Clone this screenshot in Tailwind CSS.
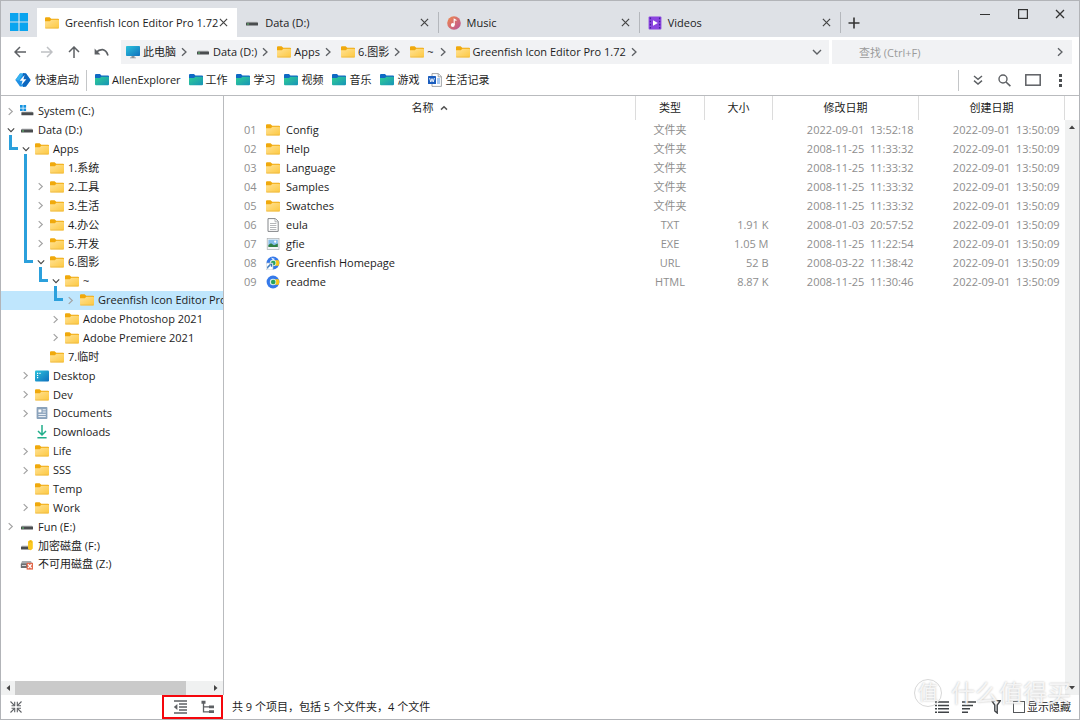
<!DOCTYPE html>
<html lang="zh-CN">
<head>
<meta charset="utf-8">
<title>Greenfish Icon Editor Pro 1.72</title>
<script src="https://cdn.jsdelivr.net/npm/@tailwindcss/browser@4"></script>
</head>
<body class="font-['Open_Sans','Noto_Sans_CJK_SC',sans-serif] text-[11px] leading-4 text-[#1c1c1c] bg-white">

<svg class="absolute size-0" aria-hidden="true" xmlns="http://www.w3.org/2000/svg">
  <defs>
    <linearGradient id="gFolder" x1="0" y1="0" x2="1" y2="1"><stop offset="0" stop-color="#ffe296"/><stop offset="1" stop-color="#fdc83f"/></linearGradient>
    <linearGradient id="gTeal" x1="0" y1="0" x2="1" y2="1"><stop offset="0" stop-color="#2fcf95"/><stop offset="1" stop-color="#1793b8"/></linearGradient>
    <linearGradient id="gBlue" x1="0" y1="0" x2="1" y2="1"><stop offset="0" stop-color="#2bc3dc"/><stop offset="1" stop-color="#0f6fbd"/></linearGradient>
    <linearGradient id="gMusic" x1="0" y1="0" x2="1" y2="1"><stop offset="0" stop-color="#f08a4b"/><stop offset="1" stop-color="#b9529a"/></linearGradient>
  </defs>
  <symbol id="i-folder" viewBox="0 0 14 14"><path d="M0 2.2Q0 1.2 1 1.2H4.6L6.2 2.8H13Q14 2.8 14 3.8V6H0Z" fill="#f0a90c"/><path d="M0 5.2H4.8L6.4 3.8H13Q14 3.8 14 4.8V11.4Q14 12.4 13 12.4H1Q0 12.4 0 11.4Z" fill="url(#gFolder)"/><path d="M.3 12H13.7" stroke="#eab440" stroke-width=".7"/></symbol>
  <symbol id="i-teal" viewBox="0 0 14 14"><path d="M0 2Q0 1 1 1H5L6.4 2.6H13Q14 2.6 14 3.6V7H0Z" fill="#0f69c4"/><path d="M0 5H5L6.4 3.8H13Q14 3.8 14 4.8V11.2Q14 12.2 13 12.2H1Q0 12.2 0 11.2Z" fill="url(#gTeal)"/></symbol>
  <symbol id="i-drive" viewBox="0 0 14 14"><path d="M2 5.4H12L13 7H1Z" fill="#c9cbcd"/><rect x="1" y="6.6" width="12" height="3" rx=".5" fill="#4a4d4f"/><rect x="2" y="7.4" width="2" height="1.2" fill="#5fae6a"/></symbol>
  <symbol id="i-sys" viewBox="0 0 14 14"><path d="M2 7.4H12L13 8.4H1Z" fill="#c9cbcd"/><rect x="1.4" y="8.2" width="12" height="3" rx=".5" fill="#4a4d4f"/><path d="M0 1H2.7V3.7H0ZM3.4 1H6.1V3.7H3.4ZM0 4.4H2.7V7.1H0ZM3.4 4.4H6.1V7.1H3.4Z" fill="#1593e0"/></symbol>
  <symbol id="i-lock" viewBox="0 0 14 14"><path d="M2 6.4H9V7.6H1Z" fill="#c9cbcd"/><rect x="1" y="7.4" width="9" height="3" rx=".5" fill="#4a4d4f"/><path d="M8 2.6Q10.5 -.6 12.8 2.4V9.6Q10.5 12.6 8 9.8Z" fill="#fbc81e"/><path d="M9.3 3.2Q10.5 1.4 11.6 3.2" fill="none" stroke="#e09d0c"/></symbol>
  <symbol id="i-off" viewBox="0 0 14 14"><path d="M2 4H11L12.4 7H.8Z" fill="#a9adb0"/><rect x=".8" y="6.4" width="11.6" height="4.6" rx=".6" fill="#6b6f73"/><path d="M2 8.5H6" stroke="#d4d6d8"/><rect x="6.6" y="5.8" width="6.4" height="6.8" fill="#e2674a"/><path d="M8 7.3L11.6 11.1M11.6 7.3L8 11.1" stroke="#fff" stroke-width="1.3"/></symbol>
  <symbol id="i-desktop" viewBox="0 0 14 14"><rect y="1.6" width="14" height="10.8" rx="1" fill="url(#gBlue)"/><path d="M2 4.3H3.2M2 6.5H3.2M2 8.7H3.2M4.4 4.3H5.6" stroke="#fff" stroke-width="1.2"/></symbol>
  <symbol id="i-pc" viewBox="0 0 14 14"><rect y="1" width="14" height="10" rx=".8" fill="url(#gBlue)"/><path d="M5.5 11H8.5V12.4H10V13.2H4V12.4H5.5Z" fill="#8b9299"/></symbol>
  <symbol id="i-doc" viewBox="0 0 14 14"><rect x="1.6" y="1" width="10.8" height="12" rx=".8" fill="#8aa2bb"/><path d="M3.4 3.4H6.4V6.4H3.4Z" fill="#fff"/><path d="M7.6 3.8H10.8M7.6 6H10.8M3.4 8.4H10.8M3.4 10.6H10.8" stroke="#f2f6fa" stroke-width="1"/></symbol>
  <symbol id="i-down" viewBox="0 0 14 14"><path d="M7 0V9.6M3 6L7 10L11 6M2.4 12.7H11.6" fill="none" stroke="#21ae8a" stroke-width="1.5"/></symbol>
  <symbol id="i-txt" viewBox="0 0 14 14"><path d="M2 .6H9.4L12.2 3.4V13.4H2Z" fill="#fff" stroke="#84878a"/><path d="M9 .8V3.8H12M4 5.5H10.4M4 7.5H10.4M4 9.5H10.4M4 11.5H10.4" fill="none" stroke="#a2a5a8" stroke-width=".8"/></symbol>
  <symbol id="i-img" viewBox="0 0 14 14"><rect x="1.2" y="1.5" width="11.8" height="11" fill="#f3f5f6" stroke="#a7adb1" stroke-width=".7"/><rect x="2.4" y="2.7" width="9.4" height="7" fill="#85bde9"/><path d="M2.4 8L5 6.2L8 8.2L11.8 6.4V9.9H2.4Z" fill="#2f7f43"/><circle cx="9.2" cy="4.7" r="1.1" fill="#fff"/></symbol>
  <symbol id="i-web" viewBox="0 0 14 14"><circle cx="7" cy="7" r="6.4" fill="#3579ea"/><path d="M9 4.2H12.700L13.400 7L12.700 9.800H9Z" fill="#fbc717"/><circle cx="7" cy="7" r="3.2" fill="#d9efe6"/><circle cx="7.2" cy="7" r="2.3" fill="#25a35a"/></symbol>
  <symbol id="i-url" viewBox="0 0 14 14"><use href="#i-web"/><path d="M5 1.6L9 3L7 4.6Z" fill="#e7f0fc"/><rect x="0" y="7" width="7" height="7" fill="#fff" stroke="#a5b4c4" stroke-width=".6"/><path d="M1.6 12.4Q1.6 9.6 4.4 9.6M3.2 8.3H5.6V10.8" fill="none" stroke="#2c6fb5" stroke-width="1.1"/></symbol>
  <symbol id="i-music" viewBox="0 0 14 14"><circle cx="7" cy="7" r="6.8" fill="url(#gMusic)"/><circle cx="5.8" cy="9" r="1.9" fill="#fff"/><path d="M7.2 9V3.2L9.4 4.4" fill="none" stroke="#fff" stroke-width="1.1"/></symbol>
  <symbol id="i-video" viewBox="0 0 14 14"><rect x=".6" y=".6" width="12.8" height="12.8" rx="1" fill="#8b45e0"/><path d="M2.4 1.6V13M11.6 1.6V13" stroke="#47209a" stroke-width="1.3" stroke-dasharray="1.6 1.5"/><path d="M5 4.2L9.8 7L5 9.8Z" fill="#fff"/></symbol>
  <symbol id="i-word" viewBox="0 0 14 14"><path d="M4 .6H10.4L13.4 3.6V13.4H4Z" fill="#fff" stroke="#8d9094" stroke-width=".8"/><path d="M10.2 .8V3.8H13.2" fill="none" stroke="#8d9094" stroke-width=".8"/><path d="M9 6H12M9 8H12M9 10H12" stroke="#4e93e6"/><rect x="0" y="3" width="8" height="8" rx=".6" fill="#1a5dbe"/><path d="M1.6 5L2.8 9L4 5.6L5.2 9L6.4 5" fill="none" stroke="#fff" stroke-width=".9"/></symbol>
  <symbol id="i-bolt" viewBox="0 0 16 16"><path d="M5 1.4H11L15.6 8L11 14.6H5L.4 8Z" fill="#1f8fe4"/><path d="M11 1.4L15.6 8L11 14.6L8 15V1Z" fill="#0c66be"/><path d="M.4 8L5 1.4H8L4 8.4Z" fill="#38b3f0"/><path d="M9.6 3L4.6 8.8H7.6L6.4 13L11.4 7.2H8.4Z" fill="#fff"/></symbol>
  <symbol id="i-right" viewBox="0 0 10 10"><path d="M3 1.2L7 5L3 8.8" fill="none" stroke="currentColor" stroke-width="1.3"/></symbol>
  <symbol id="i-chev" viewBox="0 0 10 10"><path d="M1 3L5 7L9 3" fill="none" stroke="currentColor" stroke-width="1.4"/></symbol>
  <symbol id="i-x" viewBox="0 0 10 10"><path d="M1 1L9 9M9 1L1 9" fill="none" stroke="currentColor" stroke-width="1.3"/></symbol>
</svg>

<div class="h-screen flex flex-col border border-[#b2b4b8] overflow-hidden">

  <!-- Title bar -->
  <header class="h-9 shrink-0 flex bg-[#dee1e6]">
    <button aria-label="Home" class="w-9 flex justify-center pt-3"><svg class="size-[18px]" viewBox="0 0 18 18"><path d="M0 0H8.4V8.4H0ZM9.6 0H18V8.4H9.6ZM0 9.6H8.4V18H0ZM9.6 9.6H18V18H9.6Z" fill="#0aa4ef"/></svg></button>
    <nav class="flex flex-1 max-w-[804px] pt-[7px]" aria-label="Tabs">
      <div class="flex-1 flex items-center pl-2 pr-[9px] bg-white"><svg class="size-[14px] mr-[6px]"><use href="#i-folder"/></svg><a href="#" class="flex-1 whitespace-nowrap">Greenfish Icon Editor Pro 1.72</a><button aria-label="Close"><svg class="size-[9px] text-[#444]"><use href="#i-x"/></svg></button></div>
      <div class="flex-1 flex items-center pl-2 pr-[9px]"><svg class="size-[14px] mr-[6px]"><use href="#i-drive"/></svg><a href="#" class="flex-1 whitespace-nowrap">Data (D:)</a><button aria-label="Close"><svg class="size-[9px] text-[#444]"><use href="#i-x"/></svg></button></div>
      <i class="w-px h-[21px] mt-1 bg-[#b4b7bc]"></i>
      <div class="flex-1 flex items-center pl-2 pr-[9px]"><svg class="size-[14px] mr-[6px]"><use href="#i-music"/></svg><a href="#" class="flex-1 whitespace-nowrap">Music</a><button aria-label="Close"><svg class="size-[9px] text-[#444]"><use href="#i-x"/></svg></button></div>
      <i class="w-px h-[21px] mt-1 bg-[#b4b7bc]"></i>
      <div class="flex-1 flex items-center pl-2 pr-[9px]"><svg class="size-[14px] mr-[6px]"><use href="#i-video"/></svg><a href="#" class="flex-1 whitespace-nowrap">Videos</a><button aria-label="Close"><svg class="size-[9px] text-[#444]"><use href="#i-x"/></svg></button></div>
      <i class="w-px h-[21px] mt-1 bg-[#b4b7bc]"></i>
    </nav>
    <button aria-label="New tab" class="w-[26px] flex justify-center items-center pt-[7px]"><svg class="size-3" viewBox="0 0 12 12"><path d="M6 .5V11.5M.5 6H11.5" stroke="#333" stroke-width="1.6"/></svg></button>
    <div class="ml-auto flex h-[26px] pr-px">
      <button aria-label="Minimize" class="w-[38px] flex items-center justify-center"><svg class="size-[10px]" viewBox="0 0 10 10"><path d="M0 5.5H10" stroke="#333"/></svg></button>
      <button aria-label="Maximize" class="w-[38px] flex items-center justify-center"><svg class="size-[10px]" viewBox="0 0 10 10"><rect x=".6" y=".6" width="8.8" height="8.8" fill="none" stroke="#333" stroke-width="1.2"/></svg></button>
      <button aria-label="Close window" class="w-9 flex items-center justify-center"><svg class="size-[10px] text-[#333]"><use href="#i-x"/></svg></button>
    </div>
  </header>

  <!-- Address row -->
  <div class="h-[30px] shrink-0 flex items-center pr-[7px] text-[#5d6064]">
    <div class="flex pl-[5px] w-[120px] shrink-0">
      <button aria-label="Back" class="w-[27px] flex justify-center"><svg class="size-3" viewBox="0 0 12 12"><path d="M12 6H1M6 1L1 6L6 11" fill="none" stroke="currentColor" stroke-width="1.5"/></svg></button>
      <button aria-label="Forward" class="w-[27px] flex justify-center text-[#bfc1c4]"><svg class="size-3" viewBox="0 0 12 12"><path d="M0 6H11M6 1L11 6L6 11" fill="none" stroke="currentColor" stroke-width="1.5"/></svg></button>
      <button aria-label="Up" class="w-[27px] flex justify-center"><svg class="size-3" viewBox="0 0 12 12"><path d="M6 12V1M1 6L6 1L11 6" fill="none" stroke="currentColor" stroke-width="1.5"/></svg></button>
      <button aria-label="Undo" class="w-[28px] flex justify-center"><svg class="w-[15px] h-3" viewBox="0 0 15 12"><path d="M2 6.4Q5 3.4 8.6 3.6Q12.4 4.2 14 9.4" fill="none" stroke="currentColor" stroke-width="1.6"/><path d="M.6 2.4V8.4H6.4Z" fill="currentColor"/></svg></button>
    </div>
    <div class="h-6 flex-1 flex items-center bg-[#f1f2f4] pl-[5px] pr-[7px] whitespace-nowrap">
      <svg class="size-[14px] mr-[3px]"><use href="#i-pc"/></svg><a href="#" class="text-[#1c1c1c]">此电脑</a><svg class="size-[10px] ml-[3px] mr-[7px]"><use href="#i-right"/></svg>
      <svg class="size-[14px] mr-[3px]"><use href="#i-drive"/></svg><a href="#" class="text-[#1c1c1c]">Data (D:)</a><svg class="size-[10px] ml-[3px] mr-[7px]"><use href="#i-right"/></svg>
      <svg class="size-[14px] mr-[3px]"><use href="#i-folder"/></svg><a href="#" class="text-[#1c1c1c]">Apps</a><svg class="size-[10px] ml-[3px] mr-2"><use href="#i-right"/></svg>
      <svg class="size-[14px] mr-[3px]"><use href="#i-folder"/></svg><a href="#" class="text-[#1c1c1c]">6.图影</a><svg class="size-[10px] ml-[3px] mr-2"><use href="#i-right"/></svg>
      <svg class="size-[14px] mr-[3px]"><use href="#i-folder"/></svg><a href="#" class="text-[#1c1c1c]">~</a><svg class="size-[10px] ml-1 mr-2"><use href="#i-right"/></svg>
      <svg class="size-[14px] mr-[3px]"><use href="#i-folder"/></svg><a href="#" class="text-[#1c1c1c]">Greenfish Icon Editor Pro 1.72</a><svg class="size-[10px] ml-[3px]"><use href="#i-right"/></svg>
      <button aria-label="History" class="ml-auto"><svg class="size-[10px]"><use href="#i-chev"/></svg></button>
    </div>
    <div class="h-6 w-[240px] ml-[3px] flex items-center bg-[#f1f2f4] pr-[7px]">
      <input type="text" aria-label="查找" placeholder="查找 (Ctrl+F)" class="flex-1 min-w-0 h-6 pl-[27px] outline-none placeholder:text-[#9b9b9b]">
      <button aria-label="Search options"><svg class="size-[10px]"><use href="#i-right"/></svg></button>
    </div>
  </div>

  <!-- Bookmarks -->
  <div class="h-[29px] shrink-0 flex items-center pb-[2px] pl-[14px] pr-[17px] border-b border-[#b9bbbe] whitespace-nowrap">
    <button class="flex items-center gap-1"><svg class="size-4"><use href="#i-bolt"/></svg>快速启动</button>
    <i class="w-px h-[21px] ml-[7px] mr-2 bg-[#c4c6c8]"></i>
    <div class="flex gap-2">
      <button class="flex items-center gap-[3px]"><svg class="size-[14px]"><use href="#i-teal"/></svg>AllenExplorer</button>
      <button class="flex items-center gap-[3px]"><svg class="size-[14px]"><use href="#i-teal"/></svg>工作</button>
      <button class="flex items-center gap-1"><svg class="size-[14px]"><use href="#i-teal"/></svg>学习</button>
      <button class="flex items-center gap-1"><svg class="size-[14px]"><use href="#i-teal"/></svg>视频</button>
      <button class="flex items-center gap-1"><svg class="size-[14px]"><use href="#i-teal"/></svg>音乐</button>
      <button class="flex items-center gap-1"><svg class="size-[14px]"><use href="#i-teal"/></svg>游戏</button>
      <button class="flex items-center gap-1"><svg class="size-[14px]"><use href="#i-word"/></svg>生活记录</button>
    </div>
    <div class="ml-auto flex items-center text-[#5d6064]">
      <i class="w-px h-[21px] mr-[14px] bg-[#c4c6c8]"></i>
      <button aria-label="More" class="mr-[15px]"><svg class="size-[10px]" viewBox="0 0 10 10"><path d="M1 1L5 4.4L9 1M1 5.6L5 9L9 5.6" fill="none" stroke="currentColor" stroke-width="1.4"/></svg></button>
      <button aria-label="Find" class="mr-[14px]"><svg class="size-[13px]" viewBox="0 0 13 13"><circle cx="5" cy="5" r="4" fill="none" stroke="currentColor" stroke-width="1.4"/><path d="M8 8L12.4 12.2" stroke="currentColor" stroke-width="1.6"/></svg></button>
      <button aria-label="Pane" class="mr-[18px]"><svg class="w-4 h-3" viewBox="0 0 16 12"><rect x=".8" y=".8" width="14.4" height="10.4" fill="none" stroke="currentColor" stroke-width="1.5"/></svg></button>
      <button aria-label="Menu"><svg class="w-[3px] h-[13px]" viewBox="0 0 3 13"><path d="M0 0H3V3H0ZM0 5H3V8H0ZM0 10H3V13H0Z" fill="#4c4f52"/></svg></button>
    </div>
  </div>

  <div class="flex-1 min-h-0 flex">
    <!-- Folder tree -->
    <aside class="w-[223px] shrink-0 flex flex-col border-r border-[#b9bbbe]">
      <ul id="tree" class="h-[472px] mt-[6px] flex flex-col overflow-hidden"></ul>
      <div class="mt-auto h-[14px] flex items-center bg-[#f0f1f1]">
        <svg class="w-[14px] h-[6px]" viewBox="0 0 14 6"><path d="M9 0V6L5.5 3Z" fill="#444"/></svg>
        <div class="flex-1 flex h-full"><div class="w-[88%] bg-[#cacaca]"></div></div>
        <svg class="w-[14px] h-[6px]" viewBox="0 0 14 6"><path d="M5 0V6L8.500 3Z" fill="#444"/></svg>
      </div>
    </aside>

    <!-- File list -->
    <main class="flex-1 min-w-0 flex">
      <div class="flex-1">
        <table class="w-full table-fixed border-collapse">
          <colgroup><col><col class="w-[69px]"><col class="w-[68px]"><col class="w-[146px]"><col class="w-[146px]"></colgroup>
          <thead><tr class="h-6">
            <th class="p-0 font-normal border-r border-[#dcdcdc]"><span class="inline-flex items-center gap-[6px]">名称<svg class="size-2" viewBox="0 0 8 8"><path d="M1 5.600L4 2.800L7 5.600" fill="none" stroke="#555" stroke-width="1.5"/></svg></span></th>
            <th class="p-0 font-normal border-r border-[#dcdcdc]">类型</th>
            <th class="p-0 font-normal border-r border-[#dcdcdc]">大小</th>
            <th class="p-0 font-normal border-r border-[#dcdcdc]">修改日期</th>
            <th class="p-0 font-normal border-r border-[#dcdcdc]">创建日期</th>
          </tr></thead>
          <tbody id="files"></tbody>
        </table>
      </div>
      <div class="w-[14px] mt-6 flex flex-col items-center justify-between bg-[#f0f1f1] py-[5px]">
        <svg class="w-[6px] h-1" viewBox="0 0 6 4"><path d="M0 4L3 .5L6 4Z" fill="#444"/></svg>
        <svg class="w-[6px] h-1" viewBox="0 0 6 4"><path d="M0 0L3 3.500L6 0Z" fill="#444"/></svg>
      </div>
    </main>
  </div>

  <!-- Status bar -->
  <footer class="h-6 shrink-0 flex items-center relative text-[#5d6064]">
    <div class="w-[222px] h-full flex items-center">
      <button aria-label="Collapse" class="ml-[9px]"><svg class="size-3" viewBox="0 0 12 12"><path d="M.5 .5L4.600 4.600M11.500 .5L7.400 4.600M.5 11.500L4.600 7.400M11.500 11.500L7.400 7.400" stroke="currentColor" stroke-width="1.1"/><path d="M1.500 4.700H4.700V.8M7.300 .8V4.700H11M1.500 7.300H4.700V11.200M7.300 11.200V7.300H11" fill="none" stroke="currentColor" stroke-width="1.1"/></svg></button>
      <div class="ml-auto w-[61px] h-6 border-2 border-[#f5060c] flex items-center justify-between pl-[9px] pr-[6px]">
        <button aria-label="Outdent"><svg class="size-[14px]" viewBox="0 0 14 14"><path d="M1 1H14M6 4H14M6 7H14M6 10H14M1 13H14" stroke="currentColor" stroke-width="1.3"/><path d="M4.400 4V10L.8 7Z" fill="currentColor"/></svg></button>
        <button aria-label="Tree view"><svg class="size-[14px]" viewBox="0 0 14 14"><path d="M.5 .8H4.500V3.800H.5ZM8 5.500H13V8.200H8ZM8 10.300H13V13H8Z" fill="currentColor"/><path d="M2.500 3V11.800H8M2.500 6.800H8" fill="none" stroke="currentColor" stroke-width="1.3"/></svg></button>
      </div>
    </div>
    <p class="pl-[9px] text-[#1c1c1c]">共 9 个项目，包括 5 个文件夹，4 个文件</p>
    <div class="ml-auto flex items-center pr-2">
      <button aria-label="List" class="mr-[13px]"><svg class="w-[14px] h-3" viewBox="0 0 14 12"><path d="M0 1H2M3 1H14M0 4.400H2M3 4.400H14M0 7.800H2M3 7.800H14M0 11.200H2M3 11.200H14" stroke="#3f4346" stroke-width="1.5"/></svg></button>
      <button aria-label="Sort" class="mr-[15px]"><svg class="w-[14px] h-3" viewBox="0 0 14 12"><path d="M0 1H14M0 4.400H11M0 7.800H8M0 11.200H6" stroke="#3f4346" stroke-width="1.5"/></svg></button>
      <button aria-label="Filter" class="mr-[12px]"><svg class="w-[10px] h-[14px]" viewBox="0 0 10 14"><path d="M.8 .8H9.200L6.200 5V13L3.800 11V5Z" fill="none" stroke="#3f4346" stroke-width="1.4"/></svg></button>
      <input id="hid" type="checkbox" class="appearance-none size-3 border border-[#55585b] bg-white mr-[2px]">
      <label for="hid" class="text-[#1c1c1c]">显示隐藏</label>
    </div>
    <!-- Site watermark over the lower right corner -->
    <div class="absolute right-2 -top-4 flex items-center gap-[9px] text-[24px] leading-7 text-white/80 pointer-events-none [text-shadow:0_0_2px_#b5b5b5]">
      <span class="size-7 rounded-full border border-[#d8d8d8] flex items-center justify-center text-[20px]">值</span>
      <span class="whitespace-nowrap">什么值得买</span>
    </div>
  </footer>
</div>

<script>
// [depth, state (o = open, c = closed, blank = leaf), icon, label, length of the path line]
const tree = [
  [0,'c','sys','System (C:)'],[0,'o','drive','Data (D:)',15],[1,'o','folder','Apps',109],
  [2,'','folder','1.系统'],[2,'c','folder','2.工具'],[2,'c','folder','3.生活'],[2,'c','folder','4.办公'],[2,'c','folder','5.开发'],
  [2,'o','folder','6.图影',15],[3,'o','folder','~',15],[4,'c','folder','Greenfish Icon Editor Pro 1.72'],
  [3,'c','folder','Adobe Photoshop 2021'],[3,'c','folder','Adobe Premiere 2021'],[2,'','folder','7.临时'],
  [1,'c','desktop','Desktop'],[1,'c','folder','Dev'],[1,'c','doc','Documents'],[1,'','down','Downloads'],
  [1,'c','folder','Life'],[1,'c','folder','SSS'],[1,'','folder','Temp'],[1,'c','folder','Work'],
  [0,'c','drive','Fun (E:)'],[0,'','lock','加密磁盘 (F:)'],[0,'','off','不可用磁盘 (Z:)']
];
document.getElementById('tree').innerHTML = tree.map(([d, s, icon, label, line]) => `
  <li class="flex-1 min-h-0 relative flex items-center whitespace-nowrap ${d === 4 ? 'bg-[#bfe6fd]' : ''}" style="padding-left:${d * 15}px">
    <span class="w-[19px] shrink-0 flex justify-center">${s === 'o' ? '<svg class="size-2 text-[#444]"><use href="#i-chev"/></svg>' : s === 'c' ? '<svg class="size-[9px] text-[#a3a3a3]"><use href="#i-right"/></svg>' : ''}</span>
    <svg class="size-[14px] shrink-0 mr-1"><use href="#i-${icon}"/></svg><a href="#">${label}</a>
    ${line ? `<i class="absolute z-10 top-[14px] w-[9px] border-l-3 border-b-3 border-[#2ba0dc]" style="left:${d * 15 + 8}px;height:${line}px"></i>` : ''}
  </li>`).join('');

const c = '2022-09-01&nbsp; 13:50:09';
const files = [
  ['folder','Config','文件夹','','2022-09-01&nbsp; 13:52:18'],['folder','Help','文件夹','','2008-11-25&nbsp; 11:33:32'],
  ['folder','Language','文件夹','','2008-11-25&nbsp; 11:33:32'],['folder','Samples','文件夹','','2008-11-25&nbsp; 11:33:32'],
  ['folder','Swatches','文件夹','','2008-11-25&nbsp; 11:33:32'],['txt','eula','TXT','1.91 K','2008-01-03&nbsp; 20:57:52'],
  ['img','gfie','EXE','1.05 M','2008-11-25&nbsp; 11:22:54'],['url','Greenfish Homepage','URL','52 B','2008-03-22&nbsp; 11:38:42'],
  ['web','readme','HTML','8.87 K','2008-11-25&nbsp; 11:30:46']
];
document.getElementById('files').innerHTML = files.map(([icon, name, type, size, mod], i) => `
  <tr class="h-[19px] text-[#8e8e8e] whitespace-nowrap">
    <td class="p-0"><div class="flex items-center pl-5"><span class="w-[22px]">0${i + 1}</span><svg class="size-[14px] mr-[6px]"><use href="#i-${icon}"/></svg><a href="#" class="text-[#1c1c1c]">${name}</a></div></td>
    <td class="p-0 text-center">${type}</td><td class="p-0 pr-1 text-right">${size}</td>
    <td class="p-0 pr-[5px] text-right">${mod}</td><td class="p-0 pr-[5px] text-right">${c}</td>
  </tr>`).join('');
</script>
</body>
</html>
